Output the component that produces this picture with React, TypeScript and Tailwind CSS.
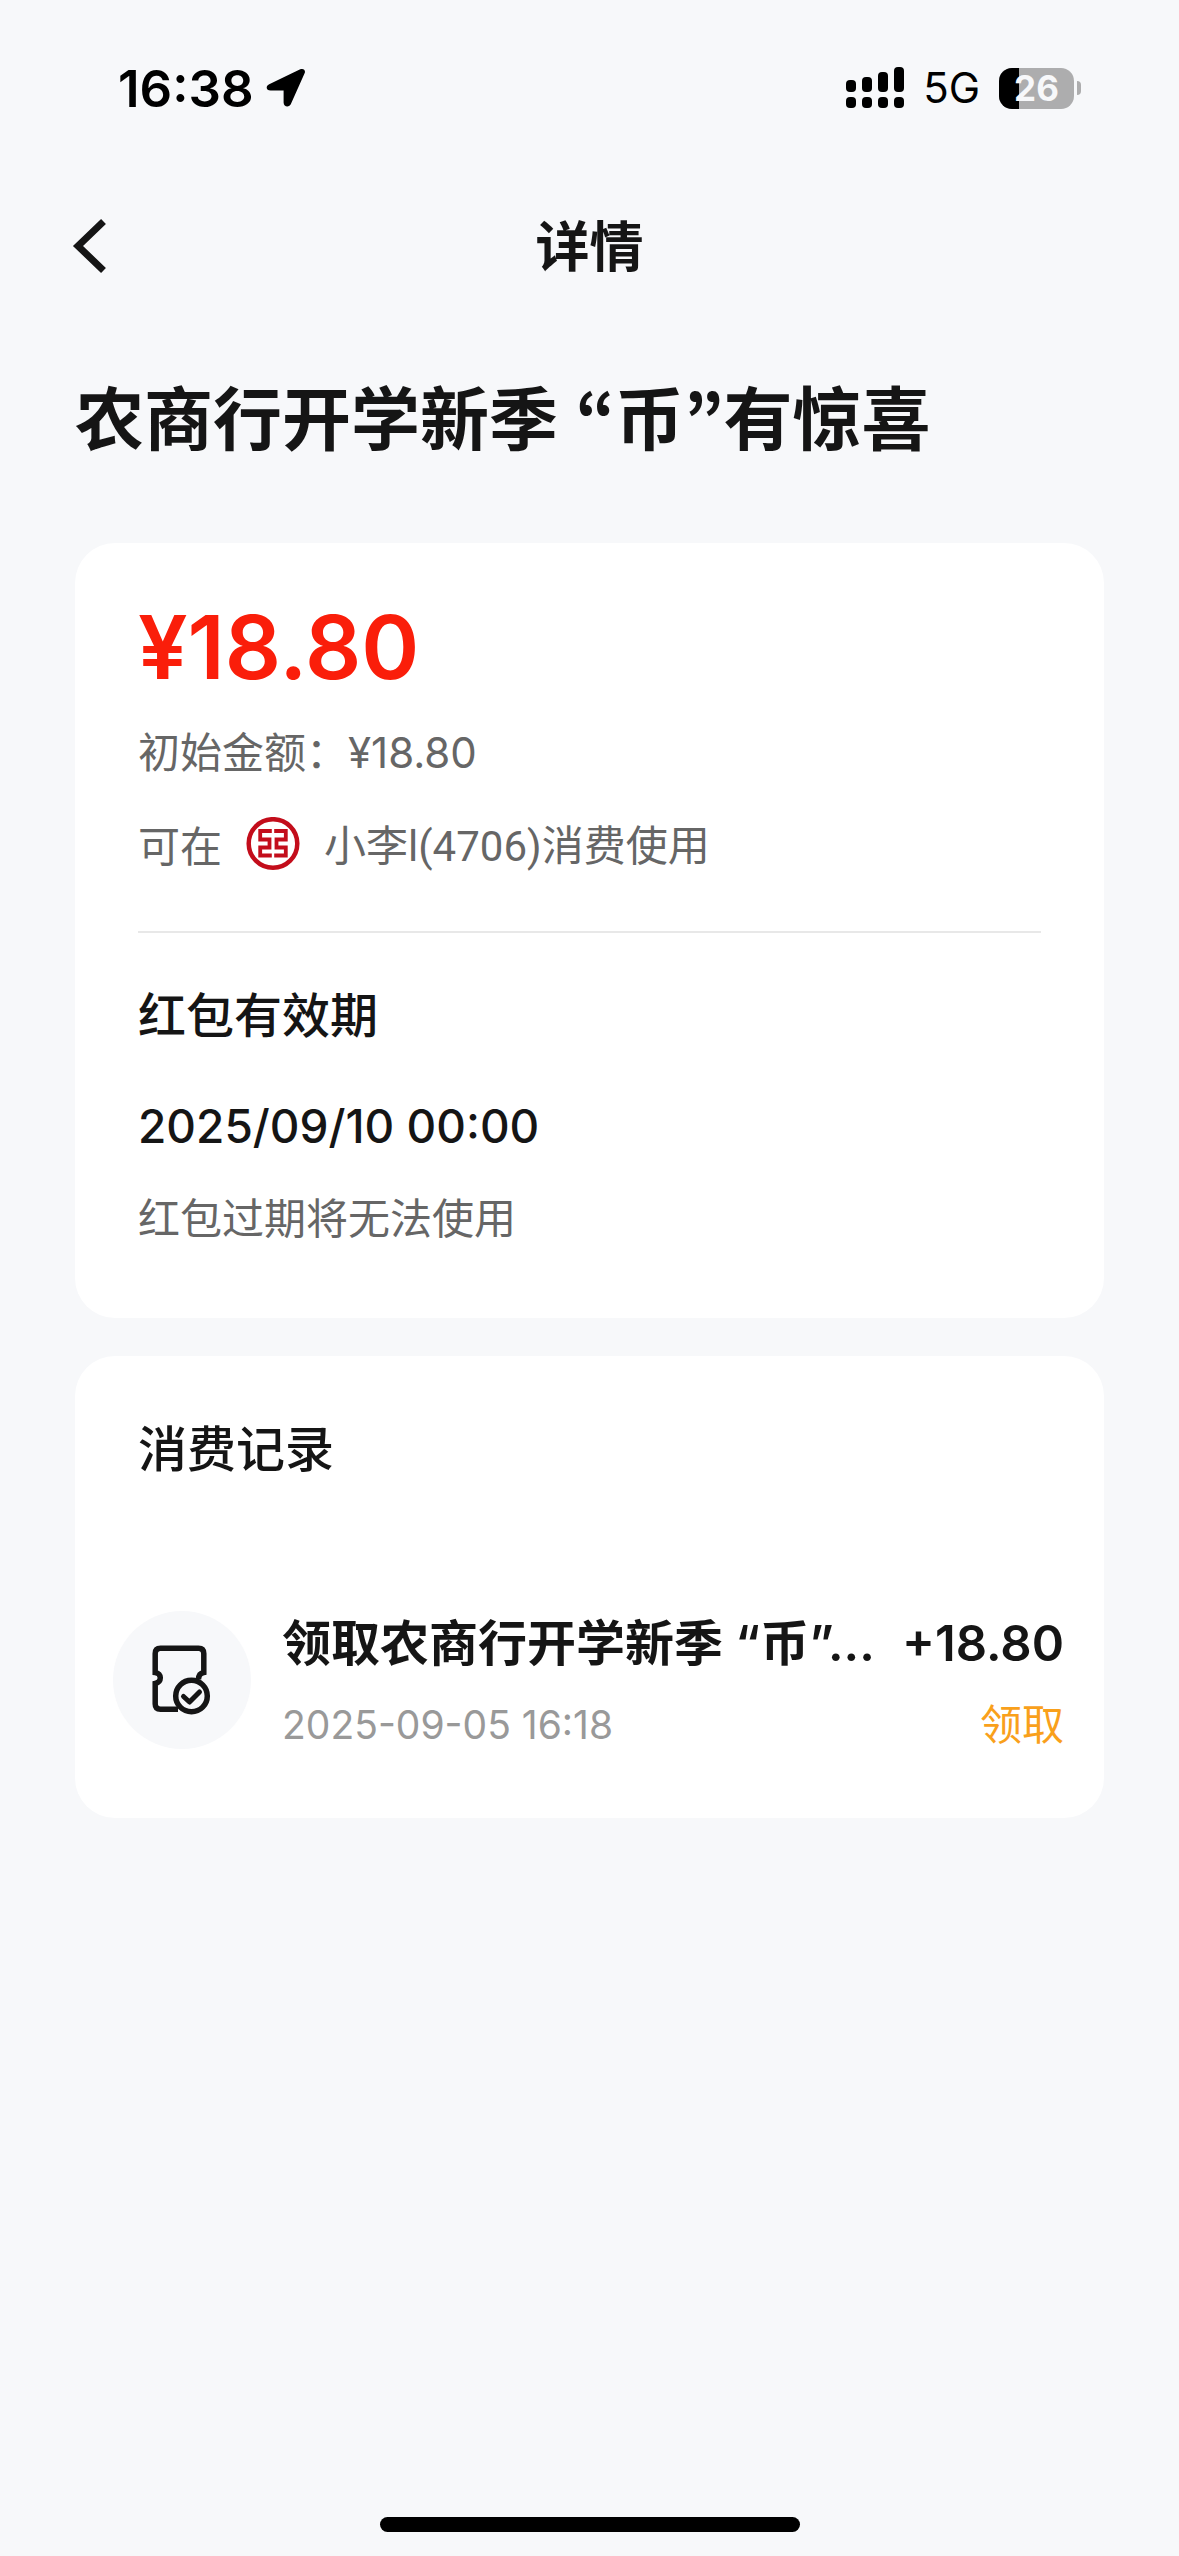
import type { ReactNode } from "react";

const record = {
  title: "领取农商行开学新季 “币”...",
  amount: "+18.80",
  time: "2025-09-05 16:18",
  status: "领取",
};

function LocationArrow() {
  return (
    <svg viewBox="0 0 40 40" className="h-10 w-10" aria-hidden>
      <path
        d="M3.2 16.2 34.2 1.3C37.4-.1 40 2.2 38.6 5.3L25 35.8C23.2 40 17.6 39 17.6 34.5V22.6H4.6C.2 22.6-.8 18.1 3.2 16.2Z"
        fill="#000"
      />
    </svg>
  );
}

function SignalBars() {
  return (
    <svg viewBox="0 0 58 42" className="h-[42px] w-[58px]" aria-hidden>
      <rect x="0" y="13" width="10" height="12" rx="4" />
      <rect x="16" y="10" width="10" height="15" rx="4" />
      <rect x="32" y="5" width="10" height="20" rx="4" />
      <rect x="48" y="0" width="10" height="25" rx="4" />
      <rect x="0" y="30" width="10" height="11" rx="4" />
      <rect x="16" y="30" width="10" height="11" rx="4" />
      <rect x="32" y="30" width="10" height="11" rx="4" />
      <rect x="48" y="30" width="10" height="11" rx="4" />
    </svg>
  );
}

function Battery({ level }: { level: number }) {
  return (
    <div className="flex items-center gap-[3px]">
      <div className="relative flex h-[41px] w-[75px] items-center justify-center overflow-hidden rounded-[13px] bg-[#adadae]">
        <div
          className="absolute inset-y-0 left-0 bg-black"
          style={{ width: `${level}%` }}
        />
        <span className="relative text-[35px] font-bold leading-none text-[#f7f8fa]">
          {level}
        </span>
      </div>
      <div className="h-[14px] w-[4px] rounded-r-full bg-[#adadae]" />
    </div>
  );
}

function StatusBar() {
  return (
    <div className="flex h-[180px] items-center justify-between pb-1 pl-[118px] pr-[98px] text-black">
      <div className="flex items-center gap-3">
        <span className="text-[51px] font-semibold leading-none">16:38</span>
        <LocationArrow />
      </div>
      <div className="flex items-center gap-[19px]">
        <SignalBars />
        <span className="text-[42px] leading-none">5G</span>
        <Battery level={26} />
      </div>
    </div>
  );
}

function NavBar({ title }: { title: string }) {
  return (
    <header className="grid h-[132px] grid-cols-[1fr_auto_1fr] items-center px-[72px]">
      <button type="button" aria-label="返回" className="justify-self-start">
        <svg viewBox="0 0 36 56" className="h-14 w-9" aria-hidden>
          <path
            d="M31.5 3.5 6 28l25.500 24.500"
            fill="none"
            stroke="#151515"
            strokeWidth="7"
          />
        </svg>
      </button>
      <h1 className="pt-1 text-[54px] font-semibold leading-none">{title}</h1>
    </header>
  );
}

function BankLogo() {
  return (
    <svg viewBox="0 0 54 54" className="h-[54px] w-[54px]" aria-hidden>
      <g fill="none" stroke="#c30d1b">
        <circle cx="27" cy="26.500" r="24.300" strokeWidth="4.500" />
        <path
          d="M25.800 14H14.200V22.500H23.500V30.500H14.200V38.500H25.800M28.200 14H39.800V22.500H30.500V30.500H39.800V38.500H28.200"
          strokeWidth="3.800"
        />
      </g>
    </svg>
  );
}

function TicketIcon() {
  return (
    <svg viewBox="0 0 60 70" className="h-[70px] w-[60px]" aria-hidden>
      <g fill="none" stroke="#151515" strokeWidth="5.500">
        <path d="M26 64.200H8.500Q3.200 64.200 3.200 59V38.500C10 37 10 28.500 3.200 27.500V8.500Q3.200 3.200 8.500 3.200H46.500Q51.800 3.200 51.800 8.500V27.500C48 28.200 46.500 31 46.500 34.500" />
        <circle cx="39.500" cy="51" r="15.800" />
        <path
          d="M31.500 51.500 37.500 57 47.500 47"
          strokeLinecap="round"
          strokeLinejoin="round"
          strokeWidth="5"
        />
      </g>
    </svg>
  );
}

function Card({ children }: { children: ReactNode }) {
  return <section className="rounded-[40px] bg-white pb-[69px]">{children}</section>;
}

export default function App() {
  return (
    <div className="flex min-h-screen flex-col bg-[#f7f8fa] font-['Inter','Noto_Sans_CJK_SC',sans-serif] text-[#151515]">
      <StatusBar />
      <NavBar title="详情" />

      <main className="flex flex-1 flex-col px-[75px]">
        <h2 className="mb-[75px] mt-[60px] text-[69px] font-semibold leading-[96px]">
          农商行开学新季{" "}
          <span className="font-['Noto_Sans_CJK_KR',sans-serif] leading-none">“</span>币
          <span className="font-['Noto_Sans_CJK_KR',sans-serif] leading-none">”</span>有惊喜
        </h2>

        <div className="flex flex-col gap-[38px]">
          <Card>
            <div className="px-[63px] pt-[54px]">
              <p className="text-[88px] font-semibold leading-[100px] text-[#fa1e0a]">
                ¥18.80
              </p>
              <p className="mt-[26px] text-[42px] leading-[60px] text-[#666]">
                初始金额：¥18.80
              </p>
              <p className="mt-[34px] flex items-start gap-6 text-[42px] leading-[60px] text-[#666]">
                <span>可在</span>
                <BankLogo />
                <span className="font-['Roboto','Noto_Sans_CJK_SC',sans-serif]">
                  小李l(4706)消费使用
                </span>
              </p>
              <hr className="mt-[54px] border-t-2 border-[#e8e8e8]" />
              <h3 className="mt-[50px] text-5xl font-medium leading-[66px]">
                红包有效期
              </h3>
              <p className="mt-[47px] text-[46px] font-medium leading-[60px]">
                2025/09/10 00:00
              </p>
              <p className="mt-[33px] text-[42px] leading-[60px] text-[#666]">
                红包过期将无法使用
              </p>
            </div>
          </Card>

          <Card>
            <h3 className="px-[63px] pt-[61px] text-[49px] font-medium leading-[66px]">
              消费记录
            </h3>
            <div className="mt-[128px] flex gap-[31px] pl-[38px] pr-10">
              <div className="flex h-[138px] w-[138px] shrink-0 items-center justify-center rounded-full bg-[#f7f8fa]">
                <TicketIcon />
              </div>
              <div className="flex min-w-0 flex-1 flex-col justify-between">
                <div className="flex justify-between gap-6 whitespace-nowrap text-[49px] font-semibold leading-[66px]">
                  <span>{record.title}</span>
                  <span>{record.amount}</span>
                </div>
                <div className="flex items-center justify-between leading-[48px]">
                  <time className="text-[39px] text-[#999]">{record.time}</time>
                  <span className="text-[42px] text-[#f9a01b]">{record.status}</span>
                </div>
              </div>
            </div>
          </Card>
        </div>
      </main>

      <div className="mx-auto mb-6 h-[15px] w-[420px] rounded-full bg-black" />
    </div>
  );
}
